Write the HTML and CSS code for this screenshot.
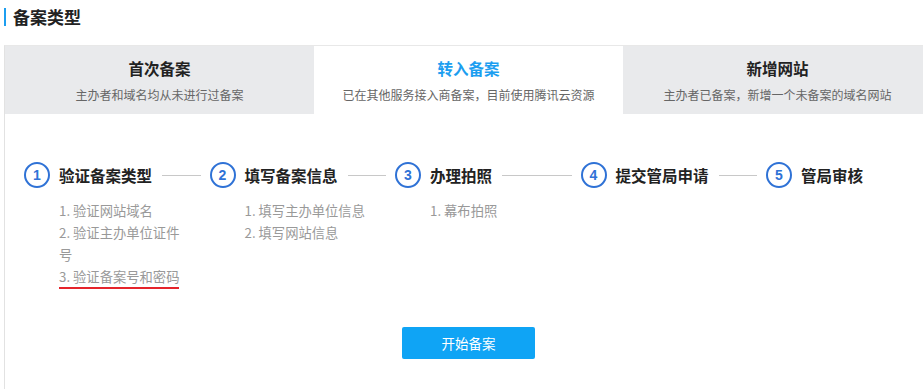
FILE: index.html
```html
<!DOCTYPE html>
<html lang="zh-CN">
<head>
<meta charset="utf-8">
<link rel="stylesheet" href="styles.css">
</head>
<body>
<div class="page">
  <h2 class="title">备案类型</h2>
  <div class="panel">
    <div class="tabs">
      <div class="tab">
        <div class="tab-title">首次备案</div>
        <div class="tab-desc">主办者和域名均从未进行过备案</div>
      </div>
      <div class="tab active">
        <div class="tab-title">转入备案</div>
        <div class="tab-desc">已在其他服务接入商备案，目前使用腾讯云资源</div>
      </div>
      <div class="tab">
        <div class="tab-title">新增网站</div>
        <div class="tab-desc">主办者已备案，新增一个未备案的域名网站</div>
      </div>
    </div>
    <div class="body">
      <div class="steps">
        <div class="step">
          <div class="step-head"><span class="num">1</span><span class="step-title">验证备案类型</span><span class="line"></span></div>
          <ul class="subs">
            <li>1. 验证网站域名</li>
            <li>2. 验证主办单位证件号</li>
            <li><span class="mark">3. 验证备案号和密码</span></li>
          </ul>
        </div>
        <div class="step">
          <div class="step-head"><span class="num">2</span><span class="step-title">填写备案信息</span><span class="line"></span></div>
          <ul class="subs">
            <li>1. 填写主办单位信息</li>
            <li>2. 填写网站信息</li>
          </ul>
        </div>
        <div class="step">
          <div class="step-head"><span class="num">3</span><span class="step-title">办理拍照</span><span class="line"></span></div>
          <ul class="subs">
            <li>1. 幕布拍照</li>
          </ul>
        </div>
        <div class="step">
          <div class="step-head"><span class="num">4</span><span class="step-title">提交管局申请</span><span class="line"></span></div>
        </div>
        <div class="step">
          <div class="step-head"><span class="num">5</span><span class="step-title">管局审核</span></div>
        </div>
      </div>
      <div class="actions">
        <button class="btn">开始备案</button>
      </div>
    </div>
  </div>
</div>
</body>
</html>
```

FILE: styles.css
```css
html, body {
  margin: 0;
  padding: 0;
  background: #fff;
  overflow: hidden;
}
body {
  font-family: "Noto Sans CJK SC", "Noto Sans", "Liberation Sans", sans-serif;
  color: #333;
}
.page {
  padding: 8px 0 0 4px;
  width: 928px;
}
.title {
  margin: 0;
  height: 18px;
  line-height: 18px;
  border-left: 2px solid #1c9ef0;
  padding-left: 7px;
  font-size: 17px;
  font-weight: 700;
  color: #222;
}
.panel {
  margin-top: 19px;
  border-top: 1px solid #e8e8e8;
  border-left: 1px solid #e2e2e2;
  width: 927px;
  height: 343px;
}
.tabs {
  display: flex;
  height: 68px;
}
.tab {
  width: 309px;
  background: #e9eaec;
  text-align: center;
  box-sizing: border-box;
}
.tab.active {
  background: #fff;
}
.tab-title {
  margin-top: 10px;
  font-size: 15.5px;
  font-weight: 700;
  line-height: 24px;
  color: #222;
}
.tab.active .tab-title {
  color: #1c9ef0;
}
.tab-desc {
  margin-top: 6px;
  font-size: 12px;
  line-height: 18px;
  color: #666;
}
.body {
  padding: 48px 0 0 19px;
}
.steps {
  display: flex;
}
.step {
  width: 185.5px;
  flex: none;
}
.step-head {
  display: flex;
  align-items: center;
  height: 26px;
}
.num {
  width: 26px;
  height: 26px;
  box-sizing: border-box;
  border: 2px solid #2f72d6;
  border-radius: 50%;
  display: flex;
  align-items: center;
  justify-content: center;
  font-family: "Liberation Sans", Arial, sans-serif;
  font-size: 14px;
  font-weight: 700;
  color: #2f72d6;
  flex: none;
}
.step-title {
  margin-left: 9px;
  font-size: 15.5px;
  font-weight: 700;
  color: #222;
  white-space: nowrap;
}
.line {
  flex: 1;
  height: 1px;
  background: #c8c8c8;
  margin: 0 9px 0 10px;
}
.subs {
  list-style: none;
  margin: 12px 0 0 35px;
  padding: 0;
  width: 125px;
  font-size: 13.3px;
  line-height: 22px;
  color: #999;
}
.mark {
  display: inline-block;
  line-height: 20px;
  border-bottom: 2px solid #e5242b;
}
.actions {
  display: flex;
  justify-content: center;
  margin: 38px 0 0 -19px;
}
.btn {
  width: 133px;
  height: 32px;
  border: 0;
  border-radius: 2px;
  background: #0fa4f5;
  color: #fff;
  font-family: inherit;
  font-size: 13.5px;
  padding: 0;
}
```
